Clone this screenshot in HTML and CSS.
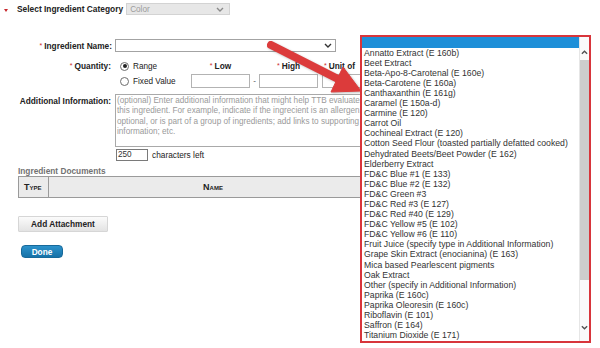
FILE: index.html
```html
<!DOCTYPE html>
<html>
<head>
<meta charset="utf-8">
<title>Ingredient</title>
<link rel="stylesheet" href="styles.css">
</head>
<body>
<div class="page">
  <div class="cat-row">
    <span class="tri"></span>
    <span class="cat-label">Select Ingredient Category</span>
    <div class="sel sel-gray"><span>Color</span><svg class="chev chev-light" viewBox="0 0 8 5"><path d="M1 1 L4 4 L7 1"/></svg></div>
  </div>

  <div class="form">
    <div class="lbl lbl-name"><span class="req">*</span>Ingredient Name:</div>
    <div class="sel sel-name"><svg class="chev" viewBox="0 0 8 5"><path d="M1 1 L4 4 L7 1"/></svg></div>

    <div class="lbl lbl-qty"><span class="req">*</span>Quantity:</div>
    <div class="qty">
      <div class="opt"><span class="radio on"></span>Range</div>
      <div class="qh"><span class="req">*</span>Low</div>
      <div></div>
      <div class="qh"><span class="req">*</span>High</div>
      <div></div>
      <div class="qh qh-left"><span class="req">*</span>Unit of</div>
      <div class="opt"><span class="radio"></span>Fixed Value</div>
      <div class="inp"></div>
      <div class="dash">-</div>
      <div class="inp"></div>
      <div></div>
      <div class="inp inp-wide"></div>
    </div>

    <div class="lbl lbl-add">Additional Information:</div>
    <div class="add">
      <div class="ta">(optional) Enter additional information that might help TTB evaluate<br>this ingredient. For example, indicate if the ingrecient is an allergen,<br>optional, or is part of a group of ingredients; add links to supporting<br>information; etc.</div>
      <div class="count"><span class="cnt">250</span><span class="cnt-txt">characters left</span></div>
    </div>
  </div>

  <div class="docs">
    <div class="docs-title">Ingredient Documents</div>
    <table class="docs-table">
      <thead>
        <tr><th class="c-type">Type</th><th class="c-name">Name</th></tr>
      </thead>
    </table>
    <button class="btn-add" type="button">Add Attachment</button>
    <button class="btn-done" type="button">Done</button>
  </div>
</div>

<svg class="arrow" viewBox="0 0 600 348">
  <g class="arrow-g">
    <line x1="271" y1="45" x2="340" y2="80"/>
    <polygon points="361,91 331,92 343,67"/>
  </g>
</svg>

<div class="listbox">
  <ul class="opts">
    <li class="hl">&nbsp;</li>
    <li>Annatto Extract (E 160b)</li>
    <li>Beet Extract</li>
    <li>Beta-Apo-8-Carotenal (E 160e)</li>
    <li>Beta-Carotene (E 160a)</li>
    <li>Canthaxanthin (E 161g)</li>
    <li>Caramel (E 150a-d)</li>
    <li>Carmine (E 120)</li>
    <li>Carrot Oil</li>
    <li>Cochineal Extract (E 120)</li>
    <li>Cotton Seed Flour (toasted partially defatted cooked)</li>
    <li>Dehydrated Beets/Beet Powder (E 162)</li>
    <li>Elderberry Extract</li>
    <li>FD&amp;C Blue #1 (E 133)</li>
    <li>FD&amp;C Blue #2 (E 132)</li>
    <li>FD&amp;C Green #3</li>
    <li>FD&amp;C Red #3 (E 127)</li>
    <li>FD&amp;C Red #40 (E 129)</li>
    <li>FD&amp;C Yellow #5 (E 102)</li>
    <li>FD&amp;C Yellow #6 (E 110)</li>
    <li>Fruit Juice (specify type in Additional Information)</li>
    <li>Grape Skin Extract (enocianina) (E 163)</li>
    <li>Mica based Pearlescent pigments</li>
    <li>Oak Extract</li>
    <li>Other (specify in Additional Information)</li>
    <li>Paprika (E 160c)</li>
    <li>Paprika Oleoresin (E 160c)</li>
    <li>Riboflavin (E 101)</li>
    <li>Saffron (E 164)</li>
    <li>Titanium Dioxide (E 171)</li>
  </ul>
  <div class="sbar">
    <div class="sb-up"><svg viewBox="0 0 8 5"><path d="M1 4 L4 1 L7 4"/></svg></div>
    <div class="sb-thumb"></div>
    <div class="sb-track"></div>
    <div class="sb-down"><svg viewBox="0 0 8 5"><path d="M1 1 L4 4 L7 1"/></svg></div>
  </div>
</div>
</body>
</html>
```

FILE: styles.css
```css
* { box-sizing: border-box; }

html, body {
  margin: 0;
  padding: 0;
}

body {
  width: 600px;
  height: 348px;
  overflow: hidden;
  position: relative;
  background: #fff;
  color: #222;
  font-family: "Liberation Sans", Arial, sans-serif;
  font-size: 8.2px;
}

.page {
  padding-top: 3px;
}

/* category row */
.cat-row {
  display: flex;
  align-items: center;
  height: 12px;
  padding-left: 4px;
}

.tri {
  width: 0;
  height: 0;
  border-left: 2.5px solid transparent;
  border-right: 2.5px solid transparent;
  border-top: 3.5px solid #c8282d;
  margin-right: 9px;
  margin-top: 2px;
}

.cat-label {
  font-weight: bold;
  font-size: 8.4px;
  margin-right: 3px;
  white-space: nowrap;
}

.sel {
  display: flex;
  align-items: center;
  justify-content: space-between;
}

.sel-gray {
  width: 104px;
  height: 12px;
  background: #e7e7e7;
  border: 1px solid #d3d3d3;
  color: #9c9c9c;
  font-size: 8.2px;
  padding: 0 5px 0 3px;
}

.chev {
  width: 8px;
  height: 5px;
  fill: none;
  stroke: #333;
  stroke-width: 1.4;
}

.chev-light {
  stroke: #8a8a8a;
}

/* form */
.form {
  display: grid;
  grid-template-columns: 112px 1fr;
  column-gap: 3px;
  row-gap: 6px;
  margin-top: 24px;
  align-items: start;
}

.lbl {
  text-align: right;
  font-weight: bold;
  font-size: 8.3px;
  white-space: nowrap;
}

.lbl-name { line-height: 13px; }
.lbl-qty { line-height: 14px; padding-right: 1px; }
.lbl-add { line-height: 10.3px; padding-top: 2px; padding-right: 1px; }

.req {
  color: #cc2a2a;
  font-size: 7px;
  font-weight: normal;
  vertical-align: 1px;
  margin-right: 2px;
}

.sel-name {
  width: 221px;
  height: 13px;
  border: 1px solid #a3a3a3;
  background: #fff;
  justify-content: flex-end;
  padding-right: 3px;
}

.qty {
  display: grid;
  grid-template-columns: 76px 59px 9px 59px 4px 60px;
  grid-template-rows: 14px 14px;
  row-gap: 1px;
}

.opt {
  display: flex;
  align-items: center;
  padding-left: 5px;
  font-size: 8.2px;
  white-space: nowrap;
}

.radio {
  width: 9px;
  height: 9px;
  border-radius: 50%;
  border: 1px solid #6d6d6d;
  background: #fff;
  margin-right: 4px;
  display: flex;
  align-items: center;
  justify-content: center;
  flex: none;
}

.radio.on::after {
  content: "";
  width: 4px;
  height: 4px;
  border-radius: 50%;
  background: #222;
}

.qh {
  text-align: center;
  font-weight: bold;
  font-size: 8.3px;
  line-height: 13px;
  white-space: nowrap;
}

.qh-left {
  text-align: left;
  padding-left: 2px;
}

.inp {
  border: 1px solid #b3b3b3;
  background: #fff;
  height: 14px;
}

.inp-wide {
  width: 80px;
}

.dash {
  text-align: center;
  font-size: 8px;
  line-height: 14px;
  color: #444;
}

.add {
  display: flex;
  flex-direction: column;
}

.ta {
  width: 285px;
  height: 53px;
  border: 1px solid #a9a9a9;
  padding: 1px 1px;
  font-size: 8.2px;
  line-height: 10.3px;
  color: #9a9a9a;
  white-space: nowrap;
  overflow: hidden;
}

.count {
  display: flex;
  align-items: center;
  height: 12px;
  margin-top: 2px;
}

.cnt {
  width: 32px;
  height: 12px;
  margin-left: 1px;
  border: 1px solid #7a7a7a;
  padding-left: 1px;
  font-size: 8.2px;
  line-height: 10px;
  color: #333;
}

.cnt-txt {
  margin-left: 4px;
  font-size: 8.3px;
  color: #222;
}

/* documents */
.docs {
  padding-left: 18px;
  margin-top: 5px;
}

.docs-title {
  font-size: 8.3px;
  line-height: 10px;
  font-weight: bold;
  color: #727272;
}

.docs-table {
  border-collapse: collapse;
  width: 360px;
  height: 22px;
  background: #ebebeb;
  border: 1px solid #9a9a9a;
}

.docs-table th {
  font-variant: small-caps;
  font-weight: bold;
  font-size: 9px;
  color: #222;
  padding: 0;
}

.c-type {
  width: 30px;
  text-align: left;
  padding-left: 5px !important;
  border-right: 1px solid #9a9a9a;
}

.c-name {
  text-align: center;
}

.btn-add {
  display: block;
  margin-top: 18px;
  width: 90px;
  height: 16px;
  padding: 0;
  border: 1px solid #d6d6d6;
  border-radius: 1px;
  background: linear-gradient(#fbfbfb, #e3e3e3);
  font-family: "Liberation Sans", Arial, sans-serif;
  font-weight: bold;
  font-size: 8.3px;
  color: #222;
}

.btn-done {
  display: block;
  margin-top: 13px;
  margin-left: 3px;
  width: 42px;
  height: 13px;
  padding: 0;
  border: 1px solid #17699a;
  border-radius: 4px;
  background: linear-gradient(#2c92cb, #1672a8);
  font-family: "Liberation Sans", Arial, sans-serif;
  font-weight: bold;
  font-size: 8.3px;
  color: #fff;
}

/* annotation arrow */
.arrow {
  position: absolute;
  left: 0;
  top: 0;
  width: 600px;
  height: 348px;
  pointer-events: none;
  filter: drop-shadow(1px 1px 1px rgba(0, 0, 0, 0.25));
}

.arrow-g line {
  stroke: #dc3b3b;
  stroke-width: 8;
  stroke-linecap: round;
}

.arrow-g polygon {
  fill: #dc3b3b;
  stroke: #dc3b3b;
  stroke-width: 1;
  stroke-linejoin: round;
}

/* open dropdown list */
.listbox {
  position: absolute;
  left: 360px;
  top: 35px;
  width: 231px;
  height: 308px;
  border: 2px solid #d8353b;
  background: #fff;
  display: flex;
  overflow: hidden;
}

.opts {
  list-style: none;
  margin: 0;
  padding: 0;
  width: 217px;
  flex: none;
  font-family: "Liberation Sans", Arial, sans-serif;
  font-size: 8.7px;
  line-height: 10.1px;
  color: #333;
  overflow: hidden;
}

.opts li {
  height: 10.1px;
  padding-left: 2px;
  white-space: nowrap;
}

.opts li.hl {
  background: #1e8fd8;
  height: 10.6px;
}

.sbar {
  width: 10px;
  flex: none;
  display: grid;
  grid-template-rows: 23px 220px 1fr 14px;
  padding-bottom: 7px;
  background: #fafafa;
  border-left: 1px solid #e6e6e6;
}

.sb-up, .sb-down {
  display: flex;
  justify-content: center;
}

.sb-up {
  align-items: flex-end;
  padding-bottom: 5px;
}

.sb-down {
  align-items: center;
}

.sb-up svg, .sb-down svg {
  width: 7px;
  height: 5px;
  fill: none;
  stroke: #505050;
  stroke-width: 1.5;
}

.sb-thumb {
  background: #cdcdcd;
}
```
